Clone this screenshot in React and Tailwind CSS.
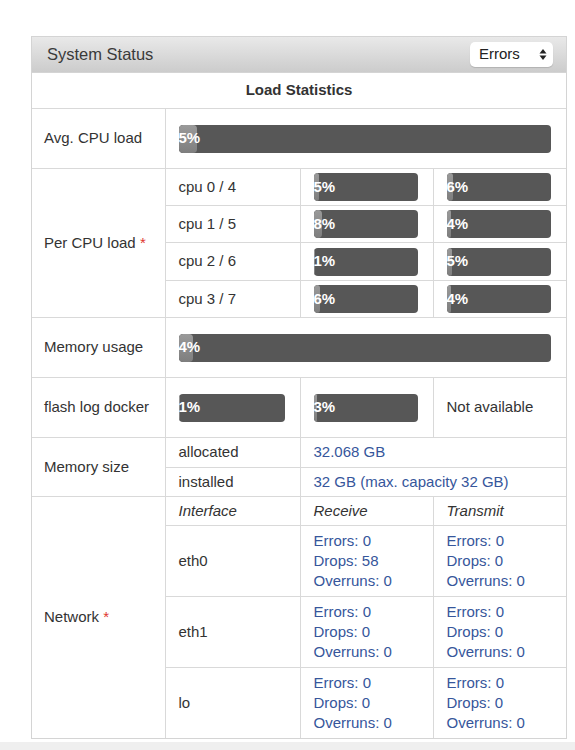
import React from "react";

const font = { fontFamily: '"Liberation Sans", Arial, Helvetica, sans-serif' };

function Bar({ pct }) {
  return (
    <div className="relative h-[28px] w-full overflow-hidden rounded-[4px] bg-[#575757]">
      <div
        className="h-full rounded-[4px] bg-gradient-to-b from-[#9a9a9a] to-[#7e7e7e]"
        style={{ width: pct + "%" }}
      />
      <span className="absolute left-0 top-0 flex h-full items-center text-[15px] font-bold text-white">
        {pct}%
      </span>
    </div>
  );
}

const td = "border border-[#d9d9d9] p-0 align-middle";

function Cell({ h, children, className = "" }) {
  return (
    <div className={`flex items-center pl-[13px] pr-[15px] ${className}`} style={{ height: h }}>
      {children}
    </div>
  );
}

function Label({ children, star }) {
  return (
    <div className="pl-[12px] pr-2">
      {children}
      {star && <span className="text-[#e0362f]"> *</span>}
    </div>
  );
}

function Stats({ drops }) {
  return (
    <div className="py-[5px] pl-[13px] leading-5 text-[#36569b]">
      <div>Errors: 0</div>
      <div>Drops: {drops}</div>
      <div>Overruns: 0</div>
    </div>
  );
}

const cpus = [
  ["cpu 0 / 4", 5, 6, 36],
  ["cpu 1 / 5", 8, 4, 36],
  ["cpu 2 / 6", 1, 5, 37],
  ["cpu 3 / 7", 6, 4, 36],
];

const nets = [
  ["eth0", 58, 70],
  ["eth1", 0, 69],
  ["lo", 0, 69],
];

export default function App() {
  return (
    <div className="min-h-[750px] bg-white pt-[36px] text-[15px] text-[#333]" style={font}>
      <div className="ml-[31px] w-[536px] border border-[#d4d4d4]">
        <div className="flex h-[36px] items-center justify-between border-b border-[#d4d4d4] bg-gradient-to-b from-[#e9e9e9] to-[#cccccc] pl-[15px] pr-[13px]">
          <span className="text-[16.5px] text-[#3a3a3a]">System Status</span>
          <div className="flex h-[25px] w-[83px] items-center justify-between rounded-[5px] bg-white pl-[9px] pr-[6px] shadow-[0_1px_1px_rgba(0,0,0,0.15)]">
            <span className="text-[15px] text-[#222]">Errors</span>
            <svg width="8" height="13" viewBox="0 0 8 13">
              <path d="M4 1 L7.5 5.5 H0.5 Z" fill="#222" />
              <path d="M4 12 L7.5 7.5 H0.5 Z" fill="#222" />
            </svg>
          </div>
        </div>
        <table className="w-full table-fixed border-collapse border-hidden">
          <colgroup>
            <col className="w-[133px]" />
            <col className="w-[135px]" />
            <col className="w-[133px]" />
            <col />
          </colgroup>
          <tbody>
            <tr>
              <td colSpan={4} className={td}>
                <div className="flex h-[35px] items-center justify-center font-bold">Load Statistics</div>
              </td>
            </tr>
            <tr>
              <td className={td}>
                <Label>Avg. CPU load</Label>
              </td>
              <td colSpan={3} className={td}>
                <Cell h={59}>
                  <Bar pct={5} />
                </Cell>
              </td>
            </tr>
            {cpus.map(([name, a, b, h], i) => (
              <tr key={name}>
                {i === 0 && (
                  <td rowSpan={4} className={td}>
                    <Label star>Per CPU load</Label>
                  </td>
                )}
                <td className={td}>
                  <Cell h={h}>{name}</Cell>
                </td>
                <td className={td}>
                  <Cell h={h}>
                    <Bar pct={a} />
                  </Cell>
                </td>
                <td className={td}>
                  <Cell h={h}>
                    <Bar pct={b} />
                  </Cell>
                </td>
              </tr>
            ))}
            <tr>
              <td className={td}>
                <Label>Memory usage</Label>
              </td>
              <td colSpan={3} className={td}>
                <Cell h={59}>
                  <Bar pct={4} />
                </Cell>
              </td>
            </tr>
            <tr>
              <td className={td}>
                <Label>flash log docker</Label>
              </td>
              <td className={td}>
                <Cell h={59}>
                  <Bar pct={1} />
                </Cell>
              </td>
              <td className={td}>
                <Cell h={59}>
                  <Bar pct={3} />
                </Cell>
              </td>
              <td className={td}>
                <Cell h={59}>Not available</Cell>
              </td>
            </tr>
            <tr>
              <td rowSpan={2} className={td}>
                <Label>Memory size</Label>
              </td>
              <td className={td}>
                <Cell h={29}>allocated</Cell>
              </td>
              <td colSpan={2} className={td}>
                <Cell h={29} className="text-[#36569b]">32.068 GB</Cell>
              </td>
            </tr>
            <tr>
              <td className={td}>
                <Cell h={28}>installed</Cell>
              </td>
              <td colSpan={2} className={td}>
                <Cell h={28} className="text-[#36569b]">32 GB (max. capacity 32 GB)</Cell>
              </td>
            </tr>
            <tr>
              <td rowSpan={4} className={td}>
                <Label star>Network</Label>
              </td>
              <td className={td}>
                <Cell h={28} className="italic">Interface</Cell>
              </td>
              <td className={td}>
                <Cell h={28} className="italic">Receive</Cell>
              </td>
              <td className={td}>
                <Cell h={28} className="italic">Transmit</Cell>
              </td>
            </tr>
            {nets.map(([name, drops, h]) => (
              <tr key={name}>
                <td className={td}>
                  <Cell h={h}>{name}</Cell>
                </td>
                <td className={td}>
                  <Stats drops={drops} />
                </td>
                <td className={td}>
                  <Stats drops={0} />
                </td>
              </tr>
            ))}
          </tbody>
        </table>
      </div>
      <div className="mt-[3px] h-[20px] w-full bg-[#efefef]" />
    </div>
  );
}
